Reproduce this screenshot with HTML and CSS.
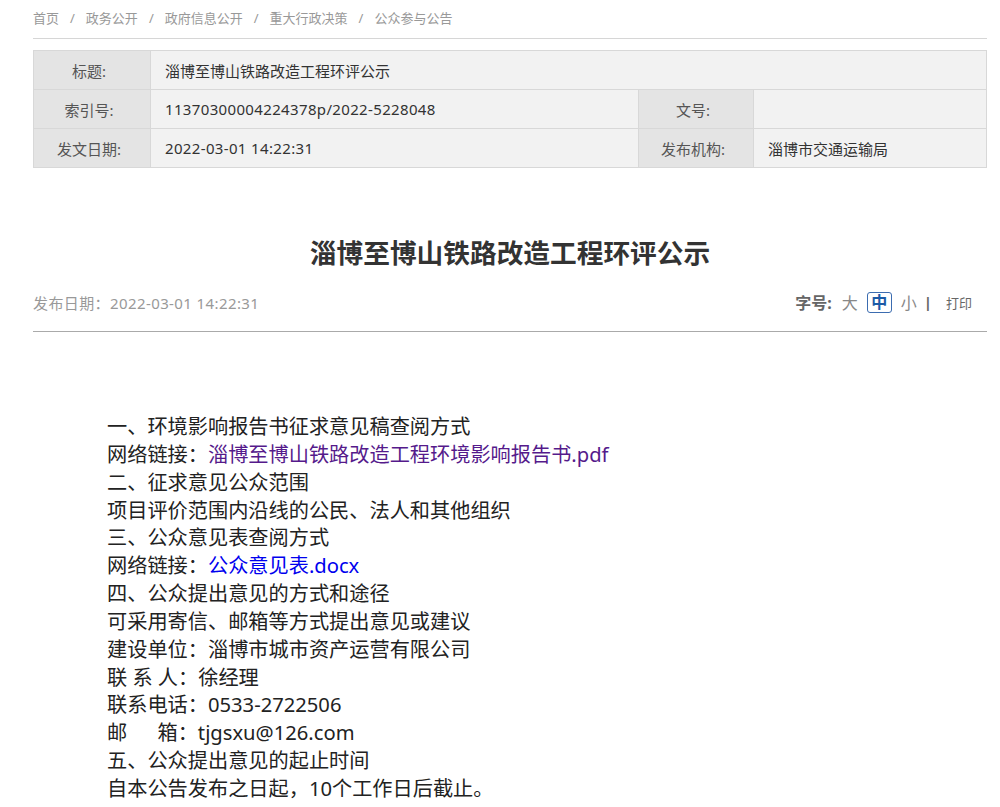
FILE: index.html
```html
<!DOCTYPE html>
<html lang="zh-CN">
<head>
<meta charset="utf-8">
<title>淄博至博山铁路改造工程环评公示</title>
<link rel="stylesheet" href="styles.css">
</head>
<body>
<div class="page">
  <nav class="crumbs">
    <a href="#">首页</a><span class="sep">/</span><a href="#">政务公开</a><span class="sep">/</span><a href="#">政府信息公开</a><span class="sep">/</span><a href="#">重大行政决策</a><span class="sep">/</span><a href="#">公众参与公告</a>
  </nav>

  <table class="info">
    <tr>
      <th class="lab">标题:</th>
      <td class="val" colspan="3">淄博至博山铁路改造工程环评公示</td>
    </tr>
    <tr>
      <th class="lab">索引号:</th>
      <td class="val num">11370300004224378p/2022-5228048</td>
      <th class="lab lab2">文号:</th>
      <td class="val"></td>
    </tr>
    <tr>
      <th class="lab">发文日期:</th>
      <td class="val num">2022-03-01 14:22:31</td>
      <th class="lab lab2">发布机构:</th>
      <td class="val">淄博市交通运输局</td>
    </tr>
  </table>

  <h1 class="title">淄博至博山铁路改造工程环评公示</h1>

  <div class="meta">
    <span class="date">发布日期：2022-03-01 14:22:31</span>
    <div class="tools">
      <span class="fs-label">字号:</span>
      <a class="fs" href="#">大</a>
      <a class="fs fs-on" href="#">中</a>
      <a class="fs" href="#">小</a>
      <span class="bar">|</span>
      <a class="print" href="#">打印</a>
    </div>
  </div>

  <div class="content">
    <p>一、环境影响报告书征求意见稿查阅方式</p>
    <p>网络链接：<a class="visited" href="#">淄博至博山铁路改造工程环境影响报告书.pdf</a></p>
    <p>二、征求意见公众范围</p>
    <p>项目评价范围内沿线的公民、法人和其他组织</p>
    <p>三、公众意见表查阅方式</p>
    <p>网络链接：<a class="link" href="#">公众意见表.docx</a></p>
    <p>四、公众提出意见的方式和途径</p>
    <p>可采用寄信、邮箱等方式提出意见或建议</p>
    <p>建设单位：淄博市城市资产运营有限公司</p>
    <p>联 系 人：徐经理</p>
    <p>联系电话：0533-2722506</p>
    <p>邮&emsp;&ensp;箱：tjgsxu@126.com</p>
    <p>五、公众提出意见的起止时间</p>
    <p>自本公告发布之日起，10个工作日后截止。</p>
  </div>
</div>
</body>
</html>
```

FILE: styles.css
```css
* { box-sizing: border-box; }
html, body { margin: 0; padding: 0; background: #fff; }
body {
  font-family: "Noto Sans", "Noto Sans CJK SC", sans-serif;
  color: #333;
}
.page {
  width: 954px;
  margin-left: 33px;
}
a { text-decoration: none; color: inherit; }

.crumbs {
  height: 39px;
  line-height: 36px;
  font-size: 13px;
  color: #999;
  border-bottom: 1px solid #d6d6d6;
}
.crumbs .sep { margin: 0 11px; }

.info {
  margin-top: 11px;
  width: 100%;
  border-collapse: collapse;
  font-size: 15px;
  border: 1px solid #e2e2e2;
}
.info th, .info td {
  height: 39px;
  border: 1px solid #d8d8d8;
  padding: 0;
  font-weight: normal;
  vertical-align: middle;
}
.info .lab {
  width: 117px;
  background: #e4e4e4;
  color: #555;
  text-align: center;
  padding-right: 6px;
}
.info .lab2 { width: 115px; }
.info .val {
  background: #f2f2f2;
  color: #333;
  padding-left: 14px;
}
.info .num { letter-spacing: 0.35px; }
.info td.val:nth-child(2) { width: 488px; }

.title {
  margin: 67px 0 0;
  text-align: center;
  font-size: 26.7px;
  line-height: 36px;
  font-weight: bold;
  color: #333;
}

.meta {
  margin-top: 16px;
  height: 45px;
  padding-bottom: 14px;
  display: flex;
  align-items: center;
  justify-content: space-between;
  border-bottom: 1px solid #aaa;
}
.date { font-size: 15px; color: #999; letter-spacing: 0.4px; }
.tools {
  display: flex;
  align-items: center;
  margin-right: 15px;
  font-size: 15px;
  color: #888;
}
.fs-label { font-size: 16px; font-weight: bold; color: #666; margin-right: 7px; }
.fs { margin: 0 3px; color: #888; font-size: 16px; }
.fs-on {
  display: inline-block;
  width: 25px;
  height: 21px;
  line-height: 19px;
  text-align: center;
  border: 1px solid #3b6cb0;
  border-radius: 3px;
  color: #1c5aa6;
  font-weight: bold;
  margin: 0 6px;
}
.bar { font-weight: bold; color: #666; margin: 0 14px 0 4px; }
.print { font-size: 13px; color: #666; }

.content {
  padding: 81px 0 0 74px;
  font-size: 20.2px;
  line-height: 27.85px;
  color: #222;
}
.content p { margin: 0; }
.content .visited { color: #551a8b; }
.content .link { color: #0000ee; }
```
